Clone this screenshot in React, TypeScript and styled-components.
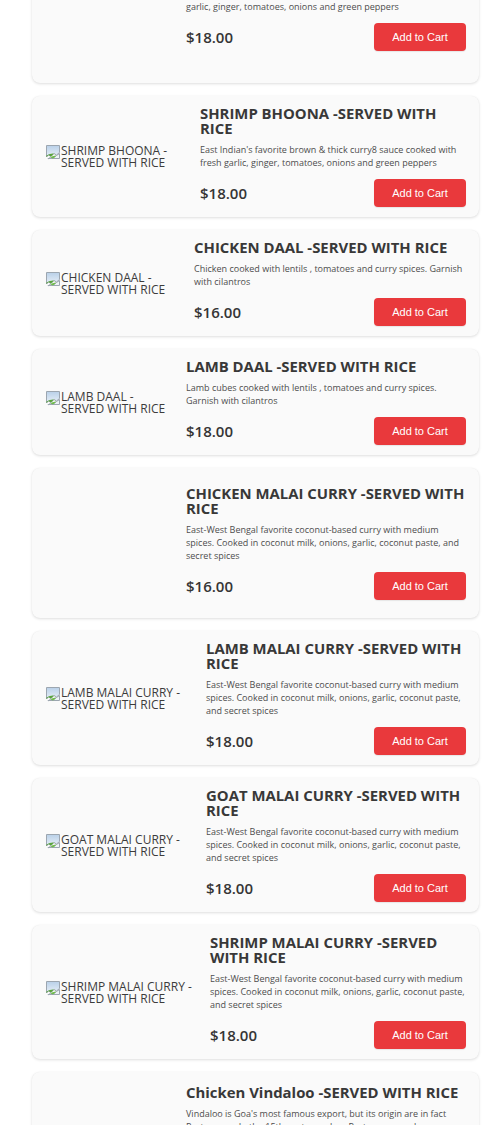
import React from "react";
import styled, { createGlobalStyle } from "styled-components";

const Global = createGlobalStyle`
  html, body { margin: 0; padding: 0; background: #ffffff; }
  body { font-family: "Open Sans", "Noto Sans", sans-serif; overflow: hidden; }
`;

const Viewport = styled.div`
  width: 496px;
  height: 1125px;
  overflow: hidden;
`;

const List = styled.main`
  display: flex;
  flex-direction: column;
  gap: 13px;
  margin-top: -67px;
  padding: 0 17px 24px 32px;
`;

const Card = styled.article`
  display: flex;
  align-items: center;
  gap: 11px;
  padding: 10px 13px;
  background: #fafafa;
  border-radius: 8px;
  box-shadow: 0 1px 3px rgba(0, 0, 0, 0.13), 0 0 1px rgba(0, 0, 0, 0.06);
`;

const ImageSlot = styled.div<{ $w: number; $blank: boolean }>`
  flex: 0 0 ${(p) => p.$w}px;
  width: ${(p) => p.$w}px;
  height: ${(p) => (p.$blank ? "130px" : "auto")};
  display: flex;
  align-items: flex-start;
  font-family: "Open Sans", sans-serif;
  font-size: 12px;
  line-height: 12px;
  color: #3c3c3c;
`;

const BrokenIcon = styled.svg`
  flex: 0 0 16px;
  width: 16px;
  height: 16px;
`;

const AltText = styled.div`
  display: flex;
  flex-direction: column;
  padding-top: 1px;
  span {
    white-space: nowrap;
  }
`;

const Body = styled.div`
  flex: 1;
  min-width: 0;
  display: flex;
  flex-direction: column;
`;

const Title = styled.h3`
  margin: 0 0 7px;
  font-family: "Open Sans", sans-serif;
  font-weight: 700;
  font-size: 14.9px;
  line-height: 15px;
  color: #383838;
`;

const Desc = styled.p`
  margin: 0 0 10px;
  font-family: "Open Sans", sans-serif;
  font-size: 9px;
  line-height: 13px;
  color: #4d4d4d;
`;

const Footer = styled.div`
  display: flex;
  align-items: center;
  justify-content: space-between;
`;

const Price = styled.span`
  font-family: "Open Sans", sans-serif;
  font-weight: 600;
  font-size: 15px;
  color: #353535;
`;

const CartButton = styled.button`
  width: 92px;
  height: 28px;
  padding: 0;
  border: none;
  border-radius: 4px;
  background: #e9393c;
  color: #ffffff;
  font-family: "Liberation Sans", Arial, sans-serif;
  font-size: 11px;
  cursor: pointer;
  box-shadow: 0 1px 1px rgba(0, 0, 0, 0.08);
`;

type Item = {
  title: string;
  desc: string;
  price: string;
  alt?: [string, string];
  imgW: number;
};

const items: Item[] = [
  {
    title: "GOAT BHOONA -SERVED WITH RICE",
    desc: "East Indian's favorite brown & thick curry sauce cooked with fresh garlic, ginger, tomatoes, onions and green peppers",
    price: "$18.00",
    imgW: 130,
  },
  {
    title: "SHRIMP BHOONA -SERVED WITH RICE",
    desc: "East Indian's favorite brown & thick curry8 sauce cooked with fresh garlic, ginger, tomatoes, onions and green peppers",
    price: "$18.00",
    alt: ["SHRIMP BHOONA -", "SERVED WITH RICE"],
    imgW: 144,
  },
  {
    title: "CHICKEN DAAL -SERVED WITH RICE",
    desc: "Chicken cooked with lentils , tomatoes and curry spices. Garnish with cilantros",
    price: "$16.00",
    alt: ["CHICKEN DAAL -", "SERVED WITH RICE"],
    imgW: 138,
  },
  {
    title: "LAMB DAAL -SERVED WITH RICE",
    desc: "Lamb cubes cooked with lentils , tomatoes and curry spices. Garnish with cilantros",
    price: "$18.00",
    alt: ["LAMB DAAL -", "SERVED WITH RICE"],
    imgW: 130,
  },
  {
    title: "CHICKEN MALAI CURRY -SERVED WITH RICE",
    desc: "East-West Bengal favorite coconut-based curry with medium spices. Cooked in coconut milk, onions, garlic, coconut paste, and secret spices",
    price: "$16.00",
    imgW: 130,
  },
  {
    title: "LAMB MALAI CURRY -SERVED WITH RICE",
    desc: "East-West Bengal favorite coconut-based curry with medium spices. Cooked in coconut milk, onions, garlic, coconut paste, and secret spices",
    price: "$18.00",
    alt: ["LAMB MALAI CURRY -", "SERVED WITH RICE"],
    imgW: 150,
  },
  {
    title: "GOAT MALAI CURRY -SERVED WITH RICE",
    desc: "East-West Bengal favorite coconut-based curry with medium spices. Cooked in coconut milk, onions, garlic, coconut paste, and secret spices",
    price: "$18.00",
    alt: ["GOAT MALAI CURRY -", "SERVED WITH RICE"],
    imgW: 150,
  },
  {
    title: "SHRIMP MALAI CURRY -SERVED WITH RICE",
    desc: "East-West Bengal favorite coconut-based curry with medium spices. Cooked in coconut milk, onions, garlic, coconut paste, and secret spices",
    price: "$18.00",
    alt: ["SHRIMP MALAI CURRY -", "SERVED WITH RICE"],
    imgW: 154,
  },
  {
    title: "Chicken Vindaloo -SERVED WITH RICE",
    desc: "Vindaloo is Goa's most famous export, but its origin are in fact Portuguese. In the 15th century, when Portuguese explorers arrived in Goa, they brought with them a dish of meat marinated in wine and garlic. The Goans adapted it with local vinegar, chilies and spices to create the fiery curry we know today.",
    price: "$17.00",
    imgW: 130,
  },
];

const Broken = () => (
  <BrokenIcon viewBox="0 0 16 16" aria-hidden="true">
    <defs>
      <linearGradient id="sky" x1="0" y1="0" x2="0" y2="1">
        <stop offset="0" stopColor="#b9d0e8" />
        <stop offset="1" stopColor="#e8f0f8" />
      </linearGradient>
    </defs>
    <path d="M1.5 1.5 H14.5 V8.5 L11.5 11 L9 9.5 L6 12.5 L3.5 11 L1.5 13 Z" fill="url(#sky)" stroke="#9ca6b0" strokeWidth="1" />
    <path d="M1.5 13 L3.5 11 L6 12.5 L9 9.5 C6.5 9.2 4 10 1.5 11.5 Z" fill="#58a33b" />
    <path d="M3 15 L5.5 13.2 L8 14.5 L11.5 11.5 L14.5 9.5 V14.5 H3 Z" fill="#eef3f8" stroke="#9ca6b0" strokeWidth="1" strokeLinejoin="round" />
    <path d="M3.5 14.5 L5.5 13.2 L8 14.5 L11.5 11.5 C9 11.5 6 12.5 3.5 14.5 Z" fill="#6fbc4b" />
  </BrokenIcon>
);

function MenuCard({ item }: { item: Item }) {
  return (
    <Card>
      <ImageSlot $w={item.imgW} $blank={!item.alt}>
        {item.alt && (
          <>
            <Broken />
            <AltText>
              <span>{item.alt[0]}</span>
              <span>{item.alt[1]}</span>
            </AltText>
          </>
        )}
      </ImageSlot>
      <Body>
        <Title>{item.title}</Title>
        <Desc>{item.desc}</Desc>
        <Footer>
          <Price>{item.price}</Price>
          <CartButton type="button">Add to Cart</CartButton>
        </Footer>
      </Body>
    </Card>
  );
}

export default function App() {
  return (
    <Viewport>
      <Global />
      <List>
        {items.map((it) => (
          <MenuCard key={it.title} item={it} />
        ))}
      </List>
    </Viewport>
  );
}
